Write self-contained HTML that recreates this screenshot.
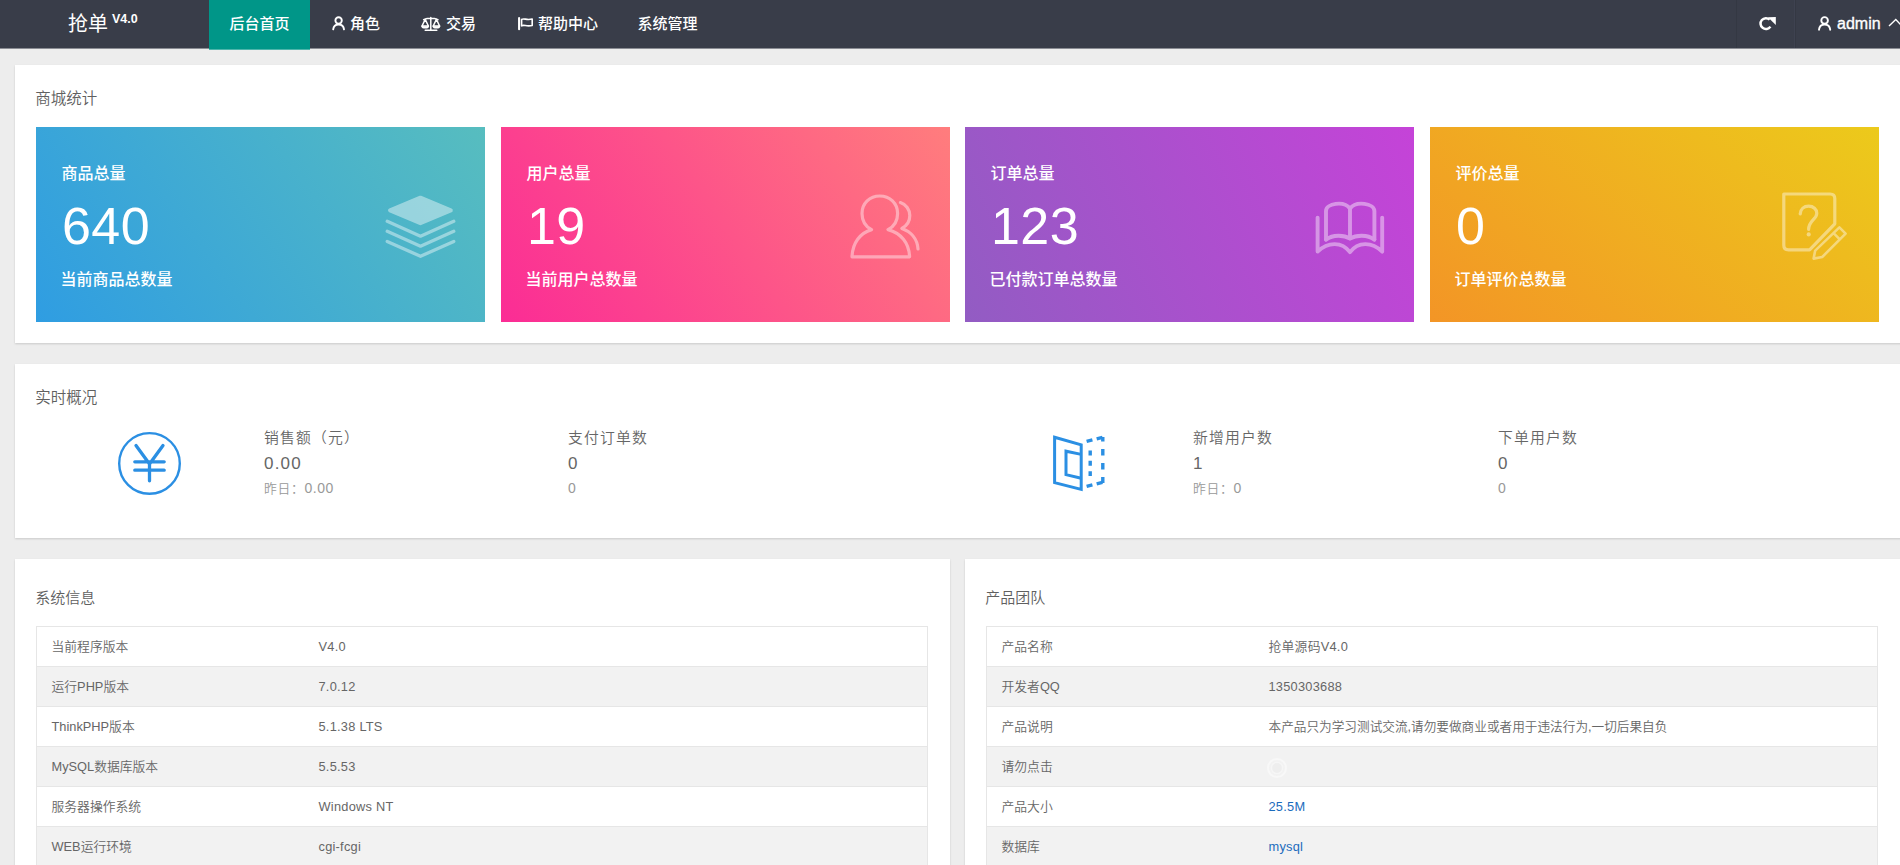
<!DOCTYPE html>
<html lang="zh-CN">
<head>
<meta charset="utf-8">
<title>抢单 V4.0 · 后台首页</title>
<style>
*{box-sizing:border-box;margin:0;padding:0}
html,body{width:1900px;height:865px;overflow:hidden}
body{position:relative;background:#ededed;color:#666;font-family:"Liberation Sans","Noto Sans CJK SC",sans-serif;font-size:13px;line-height:1}
.abs{position:absolute;white-space:nowrap}
/* header */
.header{position:absolute;left:0;top:0;width:1900px;height:48px;background:#393d49}
.header-edge{position:absolute;left:0;top:48px;width:1900px;height:1px;background:#8b8d94}
.logo{position:absolute;left:68px;top:1px;height:48px;line-height:46px;color:#fff;font-size:20px;white-space:nowrap}
.logo sup{position:absolute;left:44px;top:-5px;font-size:12.5px;font-weight:bold;line-height:46px}
.nav-item{position:absolute;top:0;height:48px;line-height:47px;color:#fff;font-size:15px;font-weight:500;white-space:nowrap;text-align:center}
.nav-item.active{background:#009688;height:50px}
.nav-item svg{position:absolute;top:0;left:0}
.sep{position:absolute;top:0;width:1px;height:48px;background:#343843}
/* panels */
.panel{position:absolute;background:#fff;box-shadow:0 1px 2px 0 rgba(0,0,0,.15)}
.ptitle{position:absolute;font-size:15.5px;color:#606060;font-weight:350;margin-left:-.7px;line-height:20px;white-space:nowrap}
/* stat cards */
.card{position:absolute;top:127px;width:449px;height:195px;color:#fff}
.card .t{position:absolute;left:25.5px;top:36px;font-size:16px;line-height:22px;font-weight:500;white-space:nowrap}
.card .n{position:absolute;left:26px;top:68.5px;font-size:52px;line-height:60px;letter-spacing:.4px;white-space:nowrap}
.card .f{position:absolute;left:24.5px;top:142px;font-size:16px;line-height:22px;font-weight:500;white-space:nowrap}
.card svg{position:absolute;left:334px;top:53px}
.c1{left:36px;background:linear-gradient(-125deg,#57bdbf,#2f9de2)}
.c2{left:501px;background:linear-gradient(-125deg,#ff7d7d,#fb2c95)}
.c3{left:965px;background:linear-gradient(-113deg,#c543d8,#925cc3)}
.c4{left:1430px;background:linear-gradient(-141deg,#ecca1b,#f39526)}
/* realtime */
.rt{position:absolute;white-space:nowrap;font-weight:350}
.rt .a{font-size:14.8px;line-height:22px;color:#666;letter-spacing:1.2px}
.rt .b{font-size:17px;line-height:26px;color:#666;margin-top:2px;letter-spacing:1.2px}
.rt .c{font-size:12.8px;line-height:20px;color:#999;margin-top:1px;letter-spacing:.7px}
.rt .c i{font-style:normal;font-size:14px;letter-spacing:.5px}
/* tables */
table{position:absolute;border-collapse:collapse;width:892px;table-layout:fixed;font-size:12.8px;color:#666;font-weight:350}
td{height:40px;border:1px solid #e6e6e6;padding:0 15px;line-height:20px;white-space:nowrap;vertical-align:middle}
td:first-child{width:267px;border-right:none;padding-left:14.5px}
td:last-child{border-left:none}
tr:nth-child(even) td{background:#f2f2f2}
td a{color:#1b6cbd;text-decoration:none}
td:last-child{letter-spacing:.25px}
</style>
</head>
<body>

<!-- ============ HEADER ============ -->
<div class="header">
  <div class="logo">抢单<sup>V4.0</sup></div>

  <div class="nav-item active" style="left:209px;width:101px">后台首页</div>

  <div class="nav-item" style="left:310px;width:90px;text-align:left;padding-left:40px">
    <svg width="90" height="48" viewBox="0 0 90 48" fill="none" stroke="#fff" stroke-width="1.9" stroke-linecap="round"><circle cx="28.6" cy="20.5" r="3.2"/><path d="M23.2,29.4 C23.6,25.8 25.8,24.5 28.6,24.5 C31.4,24.5 33.6,25.8 34,29.4"/></svg>角色</div>

  <div class="nav-item" style="left:400px;width:96px;text-align:left;padding-left:46px">
    <svg width="96" height="48" viewBox="0 0 96 48" fill="none" stroke="#fff" stroke-width="1.5" stroke-linecap="round" stroke-linejoin="round"><path d="M30.8,17.6 V29.6 M25.2,30.2 H36.8 M23.6,19.6 C26,18.6 28.6,18.2 30.8,18.2 C33,18.2 35.6,18.6 38,19.6"/><path d="M25.2,19.4 L22,26 H28.4 Z M36.4,19.4 L33.2,26 H39.6 Z"/><path d="M22,26.2 C22.6,28.4 27.8,28.4 28.4,26.2 M33.2,26.2 C33.8,28.4 39,28.4 39.6,26.2" fill="#fff"/></svg>交易</div>

  <div class="nav-item" style="left:496px;width:121px;text-align:left;padding-left:42px">
    <svg width="121" height="48" viewBox="0 0 121 48" fill="none" stroke="#fff" stroke-width="1.6" stroke-linecap="round" stroke-linejoin="round"><path d="M23.1,18 V29.2" stroke-width="2.1"/><path d="M25.6,19.4 C28.2,17.8 30.4,20.6 36.2,19 V25.4 C30.4,27 28.2,24.2 25.6,25.8 Z"/></svg>帮助中心</div>

  <div class="nav-item" style="left:617px;width:101px">系统管理</div>

  <div class="sep" style="left:1736px"></div>
  <div class="sep" style="left:1795px"></div>
  <div class="sep" style="left:1794px;background:#3e4250"></div>

  <svg class="abs" style="left:1737px;top:0" width="59" height="48" viewBox="0 0 59 48" fill="none"><path d="M32.7,19.7 A5.4,5.4 0 1 0 33.4,26.6" stroke="#fff" stroke-width="2.5"/><path d="M31,17.2 L38.8,17.1 L38.8,24.9 Z" fill="#fff"/></svg>

  <svg class="abs" style="left:1810px;top:0" width="30" height="48" viewBox="0 0 30 48" fill="none" stroke="#fff" stroke-width="1.9" stroke-linecap="round"><circle cx="14.6" cy="20.4" r="3.3"/><path d="M9,29.7 C9.4,25.8 11.6,24.5 14.6,24.5 C17.6,24.5 19.8,25.8 20.2,29.7"/></svg>
  <div class="abs" style="left:1837px;top:1px;height:48px;line-height:46px;font-size:16px;color:#fff;-webkit-text-stroke:.35px #fff">admin</div>
  <svg class="abs" style="left:1886px;top:0" width="14" height="48" viewBox="0 0 14 48" fill="none" stroke="#fff" stroke-width="1.4"><path d="M3,26 L9.8,19.6 L16,26"/></svg>
</div>
<div class="header-edge"></div>
<div class="abs" style="left:209px;top:48px;width:101px;height:2px;background:linear-gradient(#009688 50%,#4db5ab 50%)"></div>

<!-- ============ PANEL 1 : 商城统计 ============ -->
<div class="panel" style="left:15px;top:65px;width:1900px;height:278px"></div>
<div class="ptitle" style="left:36px;top:89px">商城统计</div>

<div class="card c1">
  <div class="t">商品总量</div><div class="n">640</div><div class="f">当前商品总数量</div>
  <svg width="100" height="90" viewBox="0 0 100 90" opacity=".42"><path d="M50.4,17.7 L80.8,30.4 L50.4,43.2 L20,30.4 Z" fill="#fff" stroke="#fff" stroke-width="4" stroke-linejoin="round"/><path d="M17.2,41.3 L50.5,56.2 L83.8,41.3 M17.2,51.3 L50.5,66.2 L83.8,51.3 M17.2,61.4 L50.5,76.3 L83.8,61.4" fill="none" stroke="#fff" stroke-width="3.3" stroke-linecap="round" stroke-linejoin="round"/></svg>
</div>

<div class="card c2">
  <div class="t">用户总量</div><div class="n">19</div><div class="f">当前用户总数量</div>
  <svg width="100" height="90" viewBox="0 0 100 90" opacity=".42" fill="none" stroke="#fff" stroke-width="3.2" stroke-linecap="round" stroke-linejoin="round"><path d="M36.6,49.6 C30.4,46.4 27,40.2 27,33.4 C27,23.4 34.8,16 44.8,16 C54.8,16 62.6,23.4 62.6,33.4 C62.6,40.2 59.2,46.4 53,49.6 C66,53 74,63 74.6,76.8 L17,76.8 C17.6,63 25,53 36.6,49.6 Z"/><path d="M65.4,22.6 C71,24.4 74.8,29.6 74.8,35.6 C74.8,41.2 71.8,46 66.8,48.4 C76,51.6 82.4,59 83,69"/></svg>
</div>

<div class="card c3">
  <div class="t">订单总量</div><div class="n">123</div><div class="f">已付款订单总数量</div>
  <svg style="left:335px" width="100" height="90" viewBox="0 0 100 90" opacity=".42" fill="none" stroke="#fff" stroke-width="3.9" stroke-linecap="round" stroke-linejoin="round"><path d="M26,59.6 V31 C26,23.4 44,20.4 50,28.6 C56,20.4 74.4,23.4 74.4,31 V59.6"/><path d="M26,59.6 C33,54.4 44,55 50,58.6 C56,55 67.4,54.4 74.4,59.6"/><path d="M50,28.6 V58.4"/><path d="M17.6,37.6 V71.6 C28,61.6 42,61.4 50,72.2 C58,61.4 72,61.6 82.2,71.6 V37.6"/></svg>
</div>

<div class="card c4">
  <div class="t">评价总量</div><div class="n">0</div><div class="f">订单评价总数量</div>
  <svg style="left:335px" width="100" height="90" viewBox="0 0 100 90" opacity=".42" fill="none" stroke="#fff" stroke-width="3.2" stroke-linejoin="round"><path d="M18.8,14 H65.2 C68,14 69.8,15.8 69.8,18.6 V43.8 L44.6,69.8 H23.4 C20.6,69.8 18.8,68 18.8,65.2 Z"/><path d="M35.2,34 C35.6,29 39,26.2 43.6,26.2 C48.4,26.2 51.8,29.2 51.8,33.2 C51.8,39.4 43.8,40.4 43.6,49.4" stroke-linecap="round"/><circle cx="43.7" cy="54.4" r="2.1" fill="#fff" stroke="none"/><path d="M74.4,47.4 L80.6,53.6 L57.2,77 L48.6,78.6 L50.2,70.6 Z M68.6,53.2 L74.8,59.4" stroke-width="2.6"/></svg>
</div>

<!-- ============ PANEL 2 : 实时概况 ============ -->
<div class="panel" style="left:15px;top:364px;width:1900px;height:174px"></div>
<div class="ptitle" style="left:36px;top:388px">实时概况</div>

<svg class="abs" style="left:110px;top:424px" width="80" height="80" viewBox="0 0 80 80" fill="none" stroke="#2b8fe3" stroke-linecap="round" stroke-linejoin="round"><circle cx="39.5" cy="39.4" r="30.3" stroke-width="2.4"/><path d="M26,21.6 L39.5,40 L53,21.6 M24.8,37.8 H54.2 M24.8,46.2 H54.2 M39.5,40 V56.8" stroke-width="3.3"/></svg>

<div class="rt" style="left:264px;top:427px"><div class="a">销售额（元）</div><div class="b">0.00</div><div class="c">昨日：<i>0.00</i></div></div>
<div class="rt" style="left:568px;top:427px"><div class="a">支付订单数</div><div class="b">0</div><div class="c"><i>0</i></div></div>

<svg class="abs" style="left:1040px;top:424px" width="80" height="80" viewBox="0 0 80 80" fill="none" stroke="#2b8fe3" stroke-width="3"><path d="M14.6,13.2 L41.2,20.8 V65.4 L14.6,58.6 Z" stroke-linejoin="miter"/><path d="M41.2,30.4 L26,27.2 V50.6 L41.2,54.2"/><path d="M46.6,17.4 L64.4,12.8 M46.6,62.4 L64.4,57.8" stroke-dasharray="6 4.4" stroke-width="3.4"/><path d="M62.8,13 V59" stroke-dasharray="6.6 7.4" stroke-dashoffset="-12" stroke-width="3.4"/><path d="M50.2,26.4 V52" stroke-dasharray="5 5.4" stroke-width="3.4"/></svg>

<div class="rt" style="left:1193px;top:427px"><div class="a">新增用户数</div><div class="b">1</div><div class="c">昨日：<i>0</i></div></div>
<div class="rt" style="left:1498px;top:427px"><div class="a">下单用户数</div><div class="b">0</div><div class="c"><i>0</i></div></div>

<!-- ============ PANEL 3 : 系统信息 ============ -->
<div class="panel" style="left:15px;top:559px;width:935px;height:320px"></div>
<div class="ptitle" style="left:36px;top:588px;font-size:15px">系统信息</div>
<table style="left:36px;top:626px">
  <tr><td>当前程序版本</td><td>V4.0</td></tr>
  <tr><td>运行PHP版本</td><td>7.0.12</td></tr>
  <tr><td>ThinkPHP版本</td><td>5.1.38 LTS</td></tr>
  <tr><td>MySQL数据库版本</td><td>5.5.53</td></tr>
  <tr><td>服务器操作系统</td><td>Windows NT</td></tr>
  <tr><td>WEB运行环境</td><td>cgi-fcgi</td></tr>
  <tr><td>上传大小限制</td><td>100M</td></tr>
</table>

<!-- ============ PANEL 4 : 产品团队 ============ -->
<div class="panel" style="left:965px;top:559px;width:950px;height:320px"></div>
<div class="ptitle" style="left:986px;top:588px;font-size:15px">产品团队</div>
<table style="left:986px;top:626px">
  <tr><td>产品名称</td><td>抢单源码V4.0</td></tr>
  <tr><td>开发者QQ</td><td>1350303688</td></tr>
  <tr><td>产品说明</td><td style="font-size:12.65px;letter-spacing:0">本产品只为学习测试交流,请勿要做商业或者用于违法行为,一切后果自负</td></tr>
  <tr><td>请勿点击</td><td><svg style="display:block;margin-left:-3px;margin-top:2px" width="22" height="22" viewBox="0 0 22 22" fill="none"><circle cx="11" cy="11" r="9" stroke="#f8f8f8" stroke-width="2"/><circle cx="11" cy="11" r="5.6" fill="#eeeeee" stroke="#f6f6f6" stroke-width="1.4"/></svg></td></tr>
  <tr><td>产品大小</td><td><a>25.5M</a></td></tr>
  <tr><td>数据库</td><td><a>mysql</a></td></tr>
  <tr><td>官方网站</td><td><a>thinkadmin</a></td></tr>
</table>

</body>
</html>
